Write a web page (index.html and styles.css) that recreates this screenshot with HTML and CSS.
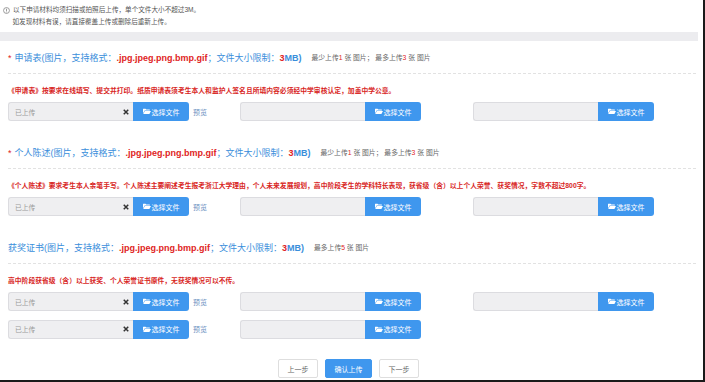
FILE: index.html
```html
<!DOCTYPE html>
<html lang="zh">
<head>
<meta charset="utf-8">
<link rel="stylesheet" href="styles.css">
</head>
<body>
<div class="frame">
  <div class="notice">
    <div class="notice-line">
      <svg class="info" viewBox="0 0 10 10"><circle cx="5" cy="5" r="4.2" fill="none" stroke="#8a8a8a" stroke-width="1.2"/><rect x="4.4" y="2.4" width="1.2" height="3.4" fill="#8a8a8a"/><rect x="4.4" y="6.5" width="1.2" height="1.2" fill="#8a8a8a"/></svg>
      <span>以下申请材料均须扫描或拍照后上传，单个文件大小不超过3M。</span>
    </div>
    <div class="notice-line indent">如发现材料有误，请直接覆盖上传或删除后重新上传。</div>
  </div>
  <div class="bar"></div>

  <section class="section first">
    <div class="title"><span class="star">*</span> 申请表(图片，支持格式：<b class="red">.jpg.jpeg.png.bmp.gif</b>；文件大小限制：<b class="red">3</b><b>MB)</b><span class="limit">最少上传<em>1</em> 张 图片； 最多上传<em>3</em> 张 图片</span></div>
    <p class="note">《申请表》按要求在线填写、提交并打印。纸质申请表须考生本人和监护人签名且所填内容必须经中学审核认定，加盖中学公章。</p>
    <div class="row">
      <div class="cell">
        <div class="field"><span class="ph">已上传</span><svg class="del" viewBox="0 0 8 8"><path d="M1 1L7 7M7 1L1 7" stroke="#333" stroke-width="2"/></svg></div>
        <button class="pick"><svg class="folder" viewBox="0 0 14 11"><path d="M0 1.6Q0 1 .6 1H4.4L5.8 2.4H11.4Q12 2.4 12 3V4.2H2.8L0 9.6Z" fill="#fff"/><path d="M3.2 5H14L11.2 10.4H.4Z" fill="#fff"/></svg>选择文件</button>
        <span class="preview">预览</span>
      </div>
      <div class="cell">
        <div class="field"></div>
        <button class="pick"><svg class="folder" viewBox="0 0 14 11"><path d="M0 1.6Q0 1 .6 1H4.4L5.8 2.4H11.4Q12 2.4 12 3V4.2H2.8L0 9.6Z" fill="#fff"/><path d="M3.2 5H14L11.2 10.4H.4Z" fill="#fff"/></svg>选择文件</button>
      </div>
      <div class="cell">
        <div class="field"></div>
        <button class="pick"><svg class="folder" viewBox="0 0 14 11"><path d="M0 1.6Q0 1 .6 1H4.4L5.8 2.4H11.4Q12 2.4 12 3V4.2H2.8L0 9.6Z" fill="#fff"/><path d="M3.2 5H14L11.2 10.4H.4Z" fill="#fff"/></svg>选择文件</button>
      </div>
    </div>
  </section>

  <section class="section">
    <div class="title"><span class="star">*</span> 个人陈述(图片，支持格式：<b class="red">.jpg.jpeg.png.bmp.gif</b>；文件大小限制：<b class="red">3</b><b>MB)</b><span class="limit">最少上传<em>1</em> 张 图片； 最多上传<em>3</em> 张 图片</span></div>
    <p class="note">《个人陈述》要求考生本人亲笔手写。个人陈述主要阐述考生报考浙江大学理由，个人未来发展规划，高中阶段考生的学科特长表现，获省级（含）以上个人荣誉、获奖情况，字数不超过800字。</p>
    <div class="row">
      <div class="cell">
        <div class="field"><span class="ph">已上传</span><svg class="del" viewBox="0 0 8 8"><path d="M1 1L7 7M7 1L1 7" stroke="#333" stroke-width="2"/></svg></div>
        <button class="pick"><svg class="folder" viewBox="0 0 14 11"><path d="M0 1.6Q0 1 .6 1H4.4L5.8 2.4H11.4Q12 2.4 12 3V4.2H2.8L0 9.6Z" fill="#fff"/><path d="M3.2 5H14L11.2 10.4H.4Z" fill="#fff"/></svg>选择文件</button>
        <span class="preview">预览</span>
      </div>
      <div class="cell">
        <div class="field"></div>
        <button class="pick"><svg class="folder" viewBox="0 0 14 11"><path d="M0 1.6Q0 1 .6 1H4.4L5.8 2.4H11.4Q12 2.4 12 3V4.2H2.8L0 9.6Z" fill="#fff"/><path d="M3.2 5H14L11.2 10.4H.4Z" fill="#fff"/></svg>选择文件</button>
      </div>
      <div class="cell">
        <div class="field"></div>
        <button class="pick"><svg class="folder" viewBox="0 0 14 11"><path d="M0 1.6Q0 1 .6 1H4.4L5.8 2.4H11.4Q12 2.4 12 3V4.2H2.8L0 9.6Z" fill="#fff"/><path d="M3.2 5H14L11.2 10.4H.4Z" fill="#fff"/></svg>选择文件</button>
      </div>
    </div>
  </section>

  <section class="section">
    <div class="title">获奖证书(图片，支持格式：<b class="red">.jpg.jpeg.png.bmp.gif</b>；文件大小限制：<b class="red">3</b><b>MB)</b><span class="limit">最多上传<em>5</em> 张 图片</span></div>
    <p class="note">高中阶段获省级（含）以上获奖、个人荣誉证书原件，无获奖情况可以不传。</p>
    <div class="row">
      <div class="cell">
        <div class="field"><span class="ph">已上传</span><svg class="del" viewBox="0 0 8 8"><path d="M1 1L7 7M7 1L1 7" stroke="#333" stroke-width="2"/></svg></div>
        <button class="pick"><svg class="folder" viewBox="0 0 14 11"><path d="M0 1.6Q0 1 .6 1H4.4L5.8 2.4H11.4Q12 2.4 12 3V4.2H2.8L0 9.6Z" fill="#fff"/><path d="M3.2 5H14L11.2 10.4H.4Z" fill="#fff"/></svg>选择文件</button>
        <span class="preview">预览</span>
      </div>
      <div class="cell">
        <div class="field"></div>
        <button class="pick"><svg class="folder" viewBox="0 0 14 11"><path d="M0 1.6Q0 1 .6 1H4.4L5.8 2.4H11.4Q12 2.4 12 3V4.2H2.8L0 9.6Z" fill="#fff"/><path d="M3.2 5H14L11.2 10.4H.4Z" fill="#fff"/></svg>选择文件</button>
      </div>
      <div class="cell">
        <div class="field"></div>
        <button class="pick"><svg class="folder" viewBox="0 0 14 11"><path d="M0 1.6Q0 1 .6 1H4.4L5.8 2.4H11.4Q12 2.4 12 3V4.2H2.8L0 9.6Z" fill="#fff"/><path d="M3.2 5H14L11.2 10.4H.4Z" fill="#fff"/></svg>选择文件</button>
      </div>
    </div>
    <div class="row second">
      <div class="cell">
        <div class="field"><span class="ph">已上传</span><svg class="del" viewBox="0 0 8 8"><path d="M1 1L7 7M7 1L1 7" stroke="#333" stroke-width="2"/></svg></div>
        <button class="pick"><svg class="folder" viewBox="0 0 14 11"><path d="M0 1.6Q0 1 .6 1H4.4L5.8 2.4H11.4Q12 2.4 12 3V4.2H2.8L0 9.6Z" fill="#fff"/><path d="M3.2 5H14L11.2 10.4H.4Z" fill="#fff"/></svg>选择文件</button>
        <span class="preview">预览</span>
      </div>
      <div class="cell">
        <div class="field"></div>
        <button class="pick"><svg class="folder" viewBox="0 0 14 11"><path d="M0 1.6Q0 1 .6 1H4.4L5.8 2.4H11.4Q12 2.4 12 3V4.2H2.8L0 9.6Z" fill="#fff"/><path d="M3.2 5H14L11.2 10.4H.4Z" fill="#fff"/></svg>选择文件</button>
      </div>
    </div>
  </section>

  <div class="actions">
    <button class="btn">上一步</button>
    <button class="btn primary">确认上传</button>
    <button class="btn">下一步</button>
  </div>
</div>
</body>
</html>
```

FILE: styles.css
```css
* { box-sizing: border-box; }
html, body { margin: 0; padding: 0; background: #fff; }
body {
  font-family: "Liberation Sans", "Noto Sans CJK SC", sans-serif;
  color: #555;
}
.frame {
  width: 705px;
  height: 382px;
  border-right: 2px solid #1a1a1a;
  border-bottom: 2px solid #1a1a1a;
  overflow: hidden;
}
.notice {
  padding: 4px 0 0 3px;
  font-size: 6.6px;
  line-height: 12px;
  color: #555;
  height: 32px;
}
.notice-line { display: flex; align-items: center; gap: 3px; }
.notice-line.indent { padding-left: 9.5px; }
.info { width: 7px; height: 7px; }
.bar {
  height: 9px;
  width: 698px;
  background: #ececef;
}
.section { padding: 9px 7px 0 8px; }
.section + .section { padding-top: 24px; }
.title {
  height: 24px;
  padding-bottom: 7px;
  line-height: 16px;
  font-size: 9px;
  color: #3a8edb;
  border-bottom: 1px dashed #e2e2e2;
  white-space: nowrap;
  display: flex;
  align-items: center;
}
.title b { font-weight: bold; }
.title .red { color: #e02424; }
.star { color: #e02424; margin-right: 3px; }
.limit {
  font-size: 6.8px;
  color: #666;
  margin-left: 10px;
}
.limit em { font-style: normal; color: #e02424; }
.note {
  margin: 12px 0 0;
  font-size: 6.8px;
  line-height: 10px;
  color: #d8261e;
  font-weight: bold;
  white-space: nowrap;
}
.row {
  display: grid;
  grid-template-columns: 232px 233px 233px;
  margin-top: 6px;
  height: 19px;
}
.row.second { margin-top: 8.5px; }
.cell { display: flex; align-items: center; }
.field {
  width: 125px;
  height: 19px;
  background: #efeff1;
  border: 1px solid #dcdce0;
  border-right: none;
  border-radius: 3px 0 0 3px;
  display: flex;
  align-items: center;
  justify-content: space-between;
  padding: 0 4px 0 6px;
}
.ph { font-size: 6.8px; color: #9a9a9a; }
.del { width: 6px; height: 6px; }
.pick {
  width: 56px;
  height: 19px;
  border: none;
  border-radius: 0 3px 3px 0;
  background: #3f97ee;
  color: #fff;
  font-family: inherit;
  font-size: 7px;
  display: flex;
  align-items: center;
  justify-content: center;
  gap: 1px;
  padding: 0;
}
.folder { width: 8px; height: 6.5px; }
.preview {
  margin-left: 4px;
  font-size: 7px;
  color: #6b8fbf;
}
.actions {
  display: flex;
  justify-content: center;
  gap: 7px;
  margin-top: 20.5px;
  padding-right: 6px;
}
.btn {
  width: 40px;
  height: 19px;
  border: 1px solid #dedede;
  border-radius: 2px;
  background: #fff;
  color: #666;
  font-family: inherit;
  font-size: 7px;
  padding: 0;
}
.btn.primary {
  width: 47px;
  background: #3f97ee;
  border-color: #3f97ee;
  color: #fff;
}
```
